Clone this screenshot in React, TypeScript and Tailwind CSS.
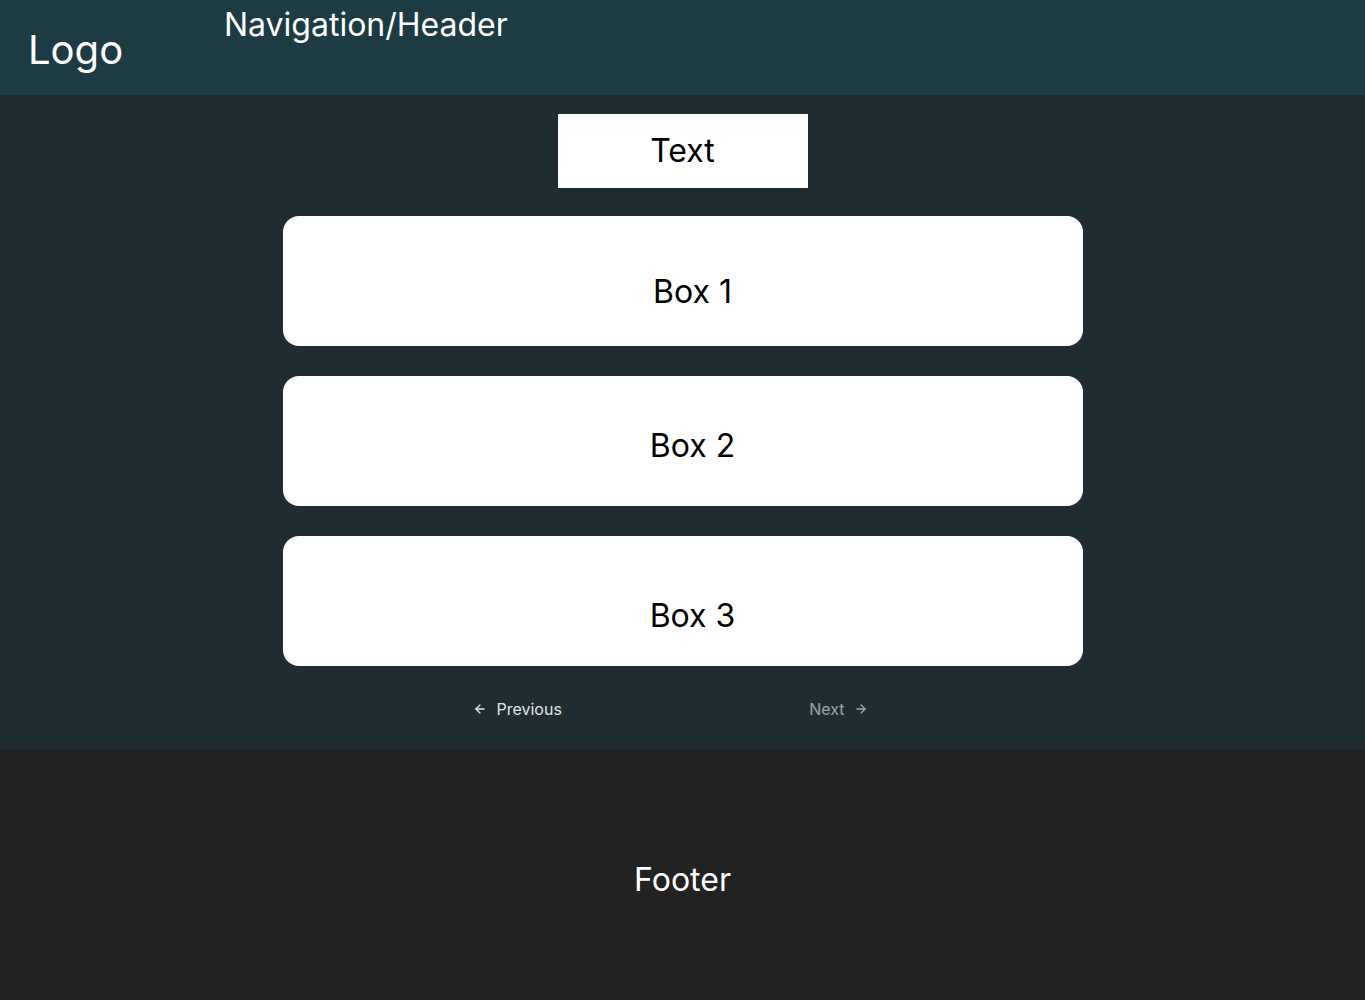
import { ArrowLeft, ArrowRight } from "lucide-react";

const boxes = [
  { label: "Box 1", pad: "pt-[22px]" },
  { label: "Box 2", pad: "pt-[10px]" },
  { label: "Box 3", pad: "pt-[30px]" },
];

const App = () => {
  return (
    <div className="min-h-screen flex flex-col font-['Inter',sans-serif]">
      <header className="flex h-[95px] bg-[#1c3b43] text-white">
        <div className="pl-7 pt-[24px] w-[224px] text-[40px] leading-[52px]">Logo</div>
        <div className="pt-[5px] text-[32px] leading-[40px]">Navigation/Header</div>
      </header>

      <main className="flex flex-col items-center bg-[#1f2d32] pt-[19px] pb-[29px]">
        <div className="flex items-center justify-center w-[250px] h-[74px] bg-white text-black text-[32px]">
          Text
        </div>
        <div className="flex flex-col gap-[30px] mt-[28px]">
          {boxes.map((b) => (
            <div
              key={b.label}
              className={`flex items-center justify-center w-[800px] h-[130px] rounded-2xl bg-white text-black text-[32px] pl-[20px] ${b.pad}`}
            >
              {b.label}
            </div>
          ))}
        </div>
        <div className="flex justify-between w-[395px] mr-[25px] mt-[31px] text-base">
          <button className="flex items-center gap-[10px] text-[#e3e6e7]">
            <ArrowLeft size={14} strokeWidth={2.25} />
            Previous
          </button>
          <button className="flex items-center gap-[9px] text-[#9ea5a8]">
            Next
            <ArrowRight size={14} strokeWidth={2.25} />
          </button>
        </div>
      </main>

      <footer className="flex flex-1 items-center justify-center bg-[#222222] text-white text-[32px] pt-[10px]">
        Footer
      </footer>
    </div>
  );
};

export default App;
